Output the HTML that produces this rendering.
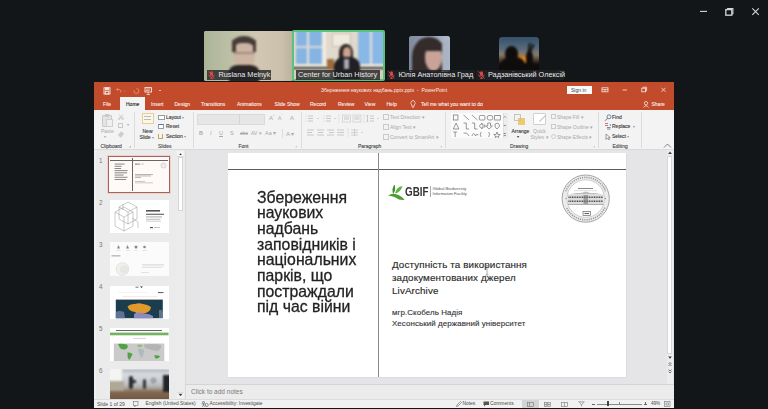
<!DOCTYPE html>
<html><head><meta charset="utf-8">
<style>
*{margin:0;padding:0;box-sizing:border-box}
html,body{width:768px;height:409px;overflow:hidden;background:#131619;font-family:"Liberation Sans",sans-serif}
div,span{position:absolute}
.t{white-space:nowrap;line-height:1}
.lbl{height:10px;background:rgba(34,34,36,.8);color:#e8e8e8;font-size:7.3px;line-height:10px;white-space:nowrap;padding-left:12px}

.tab{color:#fbece6;font-size:5px;top:101.8px;-webkit-text-stroke:0.1px #fbece6}
.rt{color:#3a3a3a;font-size:5px;-webkit-text-stroke:0.12px #3a3a3a}
.gl{color:#4a4a4a;font-size:5px;top:143.5px;-webkit-text-stroke:0.12px #4a4a4a}
.dis{color:#a8a8a8;font-size:5px}
.sep{width:1px;background:#dcdcdc;top:112px;height:36px}
</style></head><body>
<!-- ZOOM TILES -->
<div style="left:204px;top:31px;width:88.5px;height:50px;border-radius:2px;overflow:hidden;background:#c4c0aa">
 <div style="left:-3px;top:-3px;width:95px;height:56px;filter:blur(1px)">
  <div style="left:0;top:0;width:95px;height:56px;background:linear-gradient(90deg,#aab396 0%,#bcc0a6 30%,#d2c7b2 60%,#cbc0ab 85%,#b3ae98 100%)"></div>
  <div style="left:31px;top:8px;width:24px;height:16px;border-radius:50% 50% 30% 30%;background:#463b37"></div>
  <div style="left:32px;top:15px;width:22px;height:25px;border-radius:35% 35% 45% 45%;background:#cdb5a3"></div>
  <div style="left:33px;top:24px;width:20px;height:2px;background:#6d5a52;opacity:.45"></div>
  <div style="left:31px;top:12px;width:3.5px;height:12px;background:#463b37"></div>
  <div style="left:51.5px;top:12px;width:3.5px;height:12px;background:#463b37"></div>
  <div style="left:28px;top:37px;width:30px;height:20px;border-radius:30% 30% 0 0;background:#2a2523"></div>
 </div>
</div>
<div style="left:292px;top:30px;width:92.5px;height:51px;border-radius:2px;overflow:hidden;background:#5bc27a">
 <div style="left:2px;top:2px;width:88.5px;height:47px;overflow:hidden;background:#e1d9cb">
  <div style="filter:blur(1px);left:-2px;top:-2px;width:93px;height:51px">
  <div style="left:0;top:0;width:93px;height:51px;background:#e1d9cb"></div>
  <div style="left:4px;top:0;width:26px;height:34px;background:#86b4e2"></div>
  <div style="left:15px;top:0;width:2px;height:34px;background:#e6e2da"></div>
  <div style="left:4px;top:16px;width:26px;height:2px;background:#d8d8d8"></div>
  <div style="left:30px;top:0;width:4px;height:38px;background:#f0ebe2"></div>
  <div style="left:40px;top:3px;width:19px;height:14px;background:#efe9de;border:1px solid #c8bfae"></div>
  <div style="left:66px;top:0;width:27px;height:34px;background:#8ab8e6"></div>
  <div style="left:78px;top:0;width:2px;height:34px;background:#e6e2da"></div>
  <div style="left:0;top:34px;width:93px;height:3px;background:#ede7dc"></div>
  <div style="left:0;top:37px;width:93px;height:2px;background:#3d3a36"></div>
  <div style="left:0;top:39px;width:93px;height:12px;background:#d7cdbd"></div>
  <div style="left:35px;top:29px;width:7px;height:11px;background:#9a6a3e"></div>
  <div style="left:47px;top:14px;width:14px;height:20px;border-radius:45% 45% 20% 20%;background:#2c2322"></div>
  <div style="left:51px;top:17px;width:8px;height:12px;border-radius:45%;background:#caa28e"></div>
  <div style="left:42px;top:27px;width:26px;height:26px;border-radius:35% 35% 0 0;background:#211e24"></div>
  <div style="left:52px;top:29px;width:5px;height:10px;background:#a9aab4"></div>
  </div>
 </div>
</div>
<div style="left:409px;top:36px;width:40.5px;height:36px;background:#8f9aae;border-radius:3px;overflow:hidden">
 <div style="left:-2px;top:-2px;width:45px;height:40px;filter:blur(1px)">
  <div style="left:0;top:0;width:45px;height:40px;background:linear-gradient(90deg,#7d889c 0%,#9aa5b8 60%,#b9c2d0 100%)"></div>
  <div style="left:5px;top:3px;width:34px;height:42px;border-radius:48% 48% 0 0;background:#342b2b"></div>
  <div style="left:18px;top:12px;width:17px;height:25px;border-radius:40% 40% 50% 50%;background:#c9a298"></div>
  <div style="left:16px;top:8px;width:21px;height:9px;background:#342b2b;border-radius:40% 40% 20% 20%"></div>
  <div style="left:35px;top:6px;width:8px;height:34px;background:#a9b3c4"></div>
 </div>
</div>
<div style="left:499px;top:36.5px;width:40px;height:34px;border-radius:3px;overflow:hidden;background:#141210">
 <div style="left:-2px;top:-2px;width:44px;height:38px;filter:blur(1px);background:linear-gradient(180deg,#2f4c68 0%,#556a7c 35%,#8a7c6c 52%,#3a2a1c 70%,#121010 78%,#100e0d 100%)">
  <div style="left:12px;top:20px;width:24px;height:10px;border-radius:50%;background:radial-gradient(ellipse at center,#ffb02a 0%,#e07a1a 45%,rgba(120,60,20,0) 75%)"></div>
  <div style="left:8px;top:11px;width:13px;height:15px;border-radius:50% 50% 40% 40%;background:#0f0d0c"></div>
  <div style="left:4px;top:22px;width:24px;height:18px;border-radius:40% 40% 0 0;background:#0f0d0c"></div>
  <div style="left:0;top:28px;width:44px;height:10px;background:#0f0d0c"></div>
  <div style="left:31px;top:8px;width:2px;height:12px;background:#0f0d0c;transform:rotate(10deg)"></div>
  <div style="left:34px;top:9px;width:2px;height:8px;background:#0f0d0c;transform:rotate(25deg)"></div>
  <div style="left:29px;top:16px;width:7px;height:16px;background:#0f0d0c;border-radius:40%"></div>
 </div>
</div>
<div class="lbl" style="left:206.5px;top:70.3px;width:64px"><svg class="mic" width="7" height="8" viewBox="0 0 7 8" style="position:absolute;left:1.5px;top:1px"><rect x="2" y="0.3" width="3" height="4.6" rx="1.5" fill="#d8474a"/><path d="M0.8 3.5 Q0.8 6.2 3.5 6.2 Q6.2 6.2 6.2 3.5 M3.5 6.2 L3.5 7.8 M2 7.6 L5 7.6" stroke="#d8474a" stroke-width="0.8" fill="none"/><path d="M0.5 0.5 L6.5 7.5" stroke="#d8474a" stroke-width="0.9"/></svg>Ruslana Melnyk</div>
<div class="lbl" style="left:296px;top:70.3px;width:84px;padding-left:2px">Center for Urban History</div>
<div class="lbl" style="left:386.5px;top:70.3px;width:88px"><svg class="mic" width="7" height="8" viewBox="0 0 7 8" style="position:absolute;left:1.5px;top:1px"><rect x="2" y="0.3" width="3" height="4.6" rx="1.5" fill="#d8474a"/><path d="M0.8 3.5 Q0.8 6.2 3.5 6.2 Q6.2 6.2 6.2 3.5 M3.5 6.2 L3.5 7.8 M2 7.6 L5 7.6" stroke="#d8474a" stroke-width="0.8" fill="none"/><path d="M0.5 0.5 L6.5 7.5" stroke="#d8474a" stroke-width="0.9"/></svg>Юлія Анатолівна Град</div>
<div class="lbl" style="left:476px;top:70.3px;width:88px"><svg class="mic" width="7" height="8" viewBox="0 0 7 8" style="position:absolute;left:1.5px;top:1px"><rect x="2" y="0.3" width="3" height="4.6" rx="1.5" fill="#d8474a"/><path d="M0.8 3.5 Q0.8 6.2 3.5 6.2 Q6.2 6.2 6.2 3.5 M3.5 6.2 L3.5 7.8 M2 7.6 L5 7.6" stroke="#d8474a" stroke-width="0.8" fill="none"/><path d="M0.5 0.5 L6.5 7.5" stroke="#d8474a" stroke-width="0.9"/></svg>Радзанівський Олексій</div>

<!-- window controls -->
<svg style="position:absolute;left:695px;top:5px" width="70" height="14" viewBox="0 0 70 14" fill="none" stroke="#d4d6d8" stroke-width="1.1">
  <path d="M5 6.4 L12 6.4"/>
  <rect x="30.8" y="4.6" width="6" height="5.6" stroke-width="1.3"/><path d="M32.6 4.4 L32.6 3.5 L37.9 3.5 L37.9 8.8 L37 8.8" stroke-width="1.1"/>
  <path d="M57.3 3.3 L63.8 9.8 M63.8 3.3 L57.3 9.8"/>
</svg>
<!-- PPT WINDOW -->
<div id="ppt" style="left:94px;top:82px;width:580px;height:326px;background:#f3f3f3"></div>
<div style="left:94px;top:82px;width:580px;height:28px;background:#c24b2c"></div>
<div style="left:120px;top:97px;width:25px;height:13px;background:#f3f3f3"></div>
<span class="t tab" style="left:103px">File</span>
<span class="t tab" style="left:126px;color:#333;-webkit-text-stroke:0.15px #333">Home</span>
<span class="t tab" style="left:151px">Insert</span>
<span class="t tab" style="left:174.5px">Design</span>
<span class="t tab" style="left:201px">Transitions</span>
<span class="t tab" style="left:237px">Animations</span>
<span class="t tab" style="left:274.5px">Slide Show</span>
<span class="t tab" style="left:310px">Record</span>
<span class="t tab" style="left:338px">Review</span>
<span class="t tab" style="left:364.5px">View</span>
<span class="t tab" style="left:386.5px">Help</span>
<span class="t tab" style="left:421px">Tell me what you want to do</span>
<span class="t tab" style="left:651.5px">Share</span>
<span class="t" style="left:321px;top:88.3px;color:#fbece6;font-size:5px">Збереження наукових надбань.pptx.pptx &nbsp;-&nbsp; PowerPoint</span>
<div style="left:566.5px;top:86px;width:25px;height:8px;background:#fafafa"></div>
<span class="t" style="left:571px;top:87.5px;color:#444;font-size:5px">Sign in</span>



<!-- THUMBS PANE -->
<div style="left:94px;top:150px;width:91px;height:249px;background:#ebebeb"></div>
<div style="left:94px;top:150px;width:2px;height:249px;background:#f0f0f0"></div>
<div style="left:177px;top:151px;width:6.5px;height:246px;background:#ececec"></div>
<div style="left:177px;top:151px;width:6.5px;height:5.5px;background:#f4f4f4;border-bottom:1px solid #ddd"></div>
<svg style="position:absolute;left:178px;top:152px" width="5" height="4" viewBox="0 0 5 4"><path d="M1.2 2.9 L2.5 1.3 L3.8 2.9 Z" fill="#333"/></svg>
<div style="left:177.5px;top:157px;width:5.5px;height:54px;background:#fdfdfd;border:1px solid #d6d6d6"></div>
<div style="left:177px;top:392px;width:6.5px;height:6px;background:#f4f4f4;border-top:1px solid #ddd"></div>
<svg style="position:absolute;left:178px;top:393px" width="5" height="4" viewBox="0 0 5 4"><path d="M0.5 0.8 L2.5 3.2 L4.5 0.8 Z" fill="#444"/></svg>
<div style="left:185px;top:150px;width:1px;height:249px;background:#d9d9d9"></div>
<div style="left:190px;top:150px;width:0.6px;height:234px;background:#dedee2"></div>
<!-- slide numbers -->
<span class="t" style="left:99px;top:157.5px;color:#777;font-size:6.3px">1</span>
<span class="t" style="left:99px;top:199.5px;color:#777;font-size:6.3px">2</span>
<span class="t" style="left:99px;top:241.5px;color:#777;font-size:6.3px">3</span>
<span class="t" style="left:99px;top:283.5px;color:#777;font-size:6.3px">4</span>
<span class="t" style="left:99px;top:325.5px;color:#777;font-size:6.3px">5</span>
<span class="t" style="left:99px;top:367.5px;color:#777;font-size:6.3px">6</span>
<!-- thumb 1 -->
<div style="left:108px;top:156.3px;width:62px;height:36.5px;border:1.6px solid #a5655a;background:#fffaf7;box-shadow:0 0 0 1px #ecd2ca"></div>
<div style="left:109.6px;top:159.7px;width:58.8px;height:0.6px;background:#666"></div>
<div style="left:132.1px;top:157.9px;width:0.7px;height:33.3px;background:#666"></div>
<svg style="position:absolute;left:109.6px;top:157.9px" width="59" height="33" viewBox="0 0 59 33">
  <g fill="#7a7a7a"><rect x="4.6" y="5.6" width="10" height="0.9"/><rect x="4.6" y="7.8" width="7" height="0.9"/><rect x="4.6" y="10" width="6.5" height="0.9"/><rect x="4.6" y="12.2" width="13" height="0.9"/><rect x="4.6" y="14.4" width="12.5" height="0.9"/><rect x="4.6" y="16.6" width="9" height="0.9"/><rect x="4.6" y="18.8" width="13" height="0.9"/><rect x="4.6" y="21" width="11.5" height="0.9"/></g>
  <rect x="25" y="5.5" width="2" height="1.3" fill="#7aaa5a"/><rect x="27.2" y="5.6" width="2.5" height="1" fill="#777"/><rect x="30.5" y="5.7" width="3.5" height="0.7" fill="#bbb"/>
  <circle cx="53.5" cy="7.5" r="2.6" fill="#eee" stroke="#aaa" stroke-width="0.4"/>
  <rect x="25" y="16" width="18" height="0.7" fill="#999"/><rect x="25" y="17.6" width="16" height="0.7" fill="#999"/><rect x="25" y="19.2" width="6" height="0.7" fill="#999"/>
  <rect x="25" y="23" width="10" height="0.6" fill="#aaa"/><rect x="25" y="24.6" width="18" height="0.6" fill="#aaa"/>
</svg>
<!-- thumb 2 -->
<div style="left:110px;top:200px;width:58.5px;height:33px;background:#fff"></div>
<svg style="position:absolute;left:110px;top:200px" width="59" height="33" viewBox="0 0 59 33" fill="none" stroke="#8a8a8a" stroke-width="0.45">
  <path d="M9 7 L18 2 L27 7 L27 19 L18 24 L9 19 Z"/><path d="M9 7 L18 12 L27 7 M18 12 L18 24"/>
  <path d="M5 12 L14 7 L23 12 L23 26 L14 31 L5 26 Z"/><path d="M5 12 L14 17 L23 12 M14 17 L14 31"/>
  <path d="M13 4 L13 10 M22 18 L28 22 L28 28"/>
  <rect x="36" y="10" width="14" height="1.6" fill="#555" stroke="none"/>
  <rect x="36" y="13.8" width="18" height="0.8" fill="#222" stroke="none"/>
  <rect x="36" y="16" width="16" height="0.6" fill="#aaa" stroke="none"/><rect x="36" y="17.6" width="16" height="0.6" fill="#aaa" stroke="none"/><rect x="36" y="19.2" width="14" height="0.6" fill="#aaa" stroke="none"/><rect x="36" y="20.8" width="15" height="0.6" fill="#aaa" stroke="none"/>
  <rect x="40" y="27" width="3" height="1.2" fill="#555" stroke="none"/><rect x="44" y="27.2" width="6" height="0.7" fill="#aaa" stroke="none"/>
</svg>
<!-- thumb 3 -->
<div style="left:110px;top:241.8px;width:58.5px;height:34px;background:#fbfbfb"></div>
<svg style="position:absolute;left:110px;top:242px" width="59" height="34" viewBox="0 0 59 34">
  <g fill="#888"><path d="M8.5 3 L10 6.5 L7 6.5 Z"/><path d="M17.5 3 L19 6.5 L16 6.5 Z"/><circle cx="26" cy="5" r="1.5"/><circle cx="34.5" cy="5" r="1.3"/></g>
  <g fill="#ccc"><rect x="6.5" y="8.5" width="4" height="0.5"/><rect x="16" y="8.5" width="4" height="0.5"/><rect x="24.5" y="8.5" width="3" height="0.5"/><rect x="32" y="8.5" width="5" height="0.5"/></g>
  <rect x="1.5" y="13.5" width="9" height="0.8" fill="#888"/>
  <circle cx="12.5" cy="27" r="6.3" fill="#f0f0ee" stroke="#d0d0cc" stroke-width="0.5"/>
  <circle cx="14" cy="27.5" r="4" fill="#e6e6e2"/>
  <rect x="32" y="22" width="22" height="0.6" fill="#d4d4d4"/><rect x="32" y="23.6" width="22" height="0.6" fill="#d4d4d4"/><rect x="32" y="25.2" width="20" height="0.6" fill="#d4d4d4"/>
  <rect x="31" y="30" width="8" height="0.6" fill="#d4d4d4"/>
</svg>
<!-- thumb 4 -->
<div style="left:110px;top:285.5px;width:58.5px;height:33px;background:#fff"></div>
<svg style="position:absolute;left:110px;top:285.5px" width="59" height="33" viewBox="0 0 59 33">
  <rect x="25.5" y="0.6" width="3" height="1.2" fill="#888"/><path d="M30 0.5 L33 0.5 L31.5 2 Z" fill="#333"/>
  <rect x="48" y="6" width="5.5" height="1.1" fill="#666"/>
  <rect x="8" y="6.3" width="30" height="0.5" fill="#e8e8e8"/>
  <rect x="12" y="10.5" width="36" height="0.6" fill="#f0d8c8"/>
  <rect x="5.8" y="13.6" width="47" height="18.6" fill="#1b3d4d"/>
  <path d="M5.8 26 Q9 24 14 26 L15 32.2 L5.8 32.2 Z" fill="#6f7fa8" opacity="0.8"/>
  <path d="M17.5 20.5 Q20 17.5 25 18 Q29 16.5 33 18 Q37.5 18.5 41 21 Q40.5 25 37 26.5 Q33 27 31 29 Q27 28.5 25 26 Q21.5 25.5 19 23.5 Z" fill="#e29a2c"/>
  <path d="M24 28 Q29 25.5 33 27.5 Q39 27 43 30 L43 32.2 L24 32.2 Z" fill="#8a8cc0"/>
  <path d="M49 24 Q52 23 52.8 26 L52.8 32 L49 32 Z" fill="#8a9ab6" opacity="0.6"/>
</svg>
<!-- thumb 5 -->
<div style="left:110px;top:327.5px;width:58.5px;height:33px;background:#fff"></div>
<svg style="position:absolute;left:110px;top:327.5px" width="59" height="33" viewBox="0 0 59 33">
  <rect x="6" y="2" width="46" height="0.9" fill="#555"/>
  <rect x="0" y="4.6" width="58.5" height="2.7" fill="#73b463"/>
  <rect x="23" y="10" width="13" height="0.6" fill="#bbb"/>
  <rect x="3.8" y="15.5" width="50.5" height="17.5" fill="#cacaca"/>
  <path d="M8 16 Q13 15.5 17 16.5 Q19 19 16 21 Q13 22.5 10 20 Z" fill="#4ea441"/>
  <path d="M17.5 24.5 Q21 24 22.5 26 Q21 30 19 32 Q17 29 17.5 24.5 Z" fill="#4ea441"/>
  <path d="M27 17 Q30 16 33 17.5 Q31 20 28 19 Z" fill="#8fc07a"/>
  <path d="M28 21 Q32 20 34 22 Q34 27 31.5 30 Q29 27 28 21 Z" fill="#b0b8b8"/>
  <path d="M34 16.5 Q44 15.5 51 17 Q52 21 47 23 Q41 22 35 20 Z" fill="#b4b4b4"/>
  <path d="M44 27.5 Q48 26.5 50 28.5 Q49 31 45.5 30.5 Z" fill="#4ea441"/>
</svg>
<!-- thumb 6 -->
<div style="left:110px;top:369px;width:58.5px;height:29.5px;background:#a8a296;overflow:hidden">
 <div style="left:-2px;top:-2px;width:63px;height:34px;filter:blur(0.9px)">
  <div style="left:0;top:0;width:63px;height:34px;background:linear-gradient(180deg,#d9dce0 0%,#d2d5d9 30%,#c4c6c9 48%,#aaa79f 62%,#856a52 72%,#6e543f 100%)"></div>
  <div style="left:0;top:0;width:14px;height:14px;background:#f4f4f4"></div>
  <div style="left:0;top:14px;width:16px;height:10px;background:#b0a897"></div>
  <div style="left:14px;top:3px;width:47px;height:2px;background:#b4b8be"></div>
  <div style="left:21px;top:9px;width:4px;height:13px;background:#23272e;border-radius:2px"></div>
  <div style="left:24px;top:13px;width:4px;height:3px;background:#2a2e35"></div>
  <div style="left:35px;top:12px;width:3px;height:10px;background:#2e3238;border-radius:2px"></div>
  <div style="left:42.5px;top:11px;width:5px;height:5px;border-radius:50%;border:0.8px solid #555"></div>
  <div style="left:55px;top:8px;width:8px;height:17px;background:#22252a"></div>
 </div>
</div>
<!-- WORK AREA -->
<div style="left:186px;top:150px;width:488px;height:234px;background:#e5e5e8"></div>
<div style="left:666.5px;top:150px;width:6px;height:234px;background:#ececec"></div>
<svg style="position:absolute;left:666.5px;top:150px" width="6" height="6" viewBox="0 0 6 6"><path d="M1 4 L3 1.5 L5 4 Z" fill="#444"/></svg>
<div style="left:667px;top:156px;width:5px;height:198px;background:#fdfdfd;border:1px solid #d6d6d6"></div>
<svg style="position:absolute;left:666.5px;top:355px" width="6" height="20" viewBox="0 0 6 20"><path d="M1.2 1.5 L3 3.8 L4.8 1.5 Z" fill="#333"/><path d="M1.5 9 L3 7.5 L4.5 9 M1.5 11 L3 9.5 L4.5 11" stroke="#555" stroke-width="0.8" fill="none"/><path d="M1.5 14.5 L3 16 L4.5 14.5 M1.5 16.5 L3 18 L4.5 16.5" stroke="#555" stroke-width="0.8" fill="none"/></svg>
<!-- SLIDE -->
<div id="slide" style="left:227.5px;top:153px;width:398.5px;height:224px;background:#fff;box-shadow:0.5px 0.5px 1.5px #c8c8c8"></div>
<div style="left:227.5px;top:168.6px;width:398.5px;height:1.3px;background:#5c5c5c"></div>
<div style="left:377.5px;top:153px;width:1.3px;height:224px;background:#8c8c8c"></div>

<!-- SLIDE CONTENT -->
<div class="t" style="left:257px;top:189.5px;color:#222;font-size:17px;line-height:15.7px;white-space:pre;transform:scaleX(0.93);transform-origin:0 0;-webkit-text-stroke:0.3px #222">Збереження
наукових
надбань
заповідників і
національних
парків, що
постраждали
під час війни</div>
<!-- gbif -->
<svg style="position:absolute;left:387px;top:183px" width="19" height="18" viewBox="0 0 19 18">
  <path d="M7.5 1.5 Q4.5 5 6 11 Q9.5 7.5 7.5 1.5 Z" fill="#3f8f2a"/>
  <path d="M15.5 3 Q9.5 3.5 8 10.5 Q13.5 9.5 15.5 3 Z" fill="#62b33d"/>
  <path d="M1 12.5 Q5.5 9.5 10 11.5 Q15 13 17.5 17 Q12 17.5 8.5 14.5 Q5 12.8 1 12.5 Z" fill="#4d9e31"/>
</svg>
<span class="t" style="left:405px;top:185.5px;color:#333;font-size:12px;font-weight:bold;transform:scaleX(0.82);transform-origin:0 0">GBIF</span>
<div style="left:429.5px;top:186px;width:0.7px;height:10.5px;background:#aaa"></div>
<span class="t" style="left:432.5px;top:187px;color:#555;font-size:4.1px;line-height:4.8px">Global Biodiversity<br>Information Facility</span>
<!-- seal -->
<svg style="position:absolute;left:561px;top:174px" width="50" height="50" viewBox="0 0 50 50" fill="none">
  <circle cx="24.7" cy="24.6" r="21.3" stroke="#ececec" stroke-width="4"/>
  <path d="M4.78 17.35 A21.2 21.2 0 0 1 44.62 17.35" stroke="#9a9a9a" stroke-width="1.6" stroke-dasharray="1.2 1"/>
  <path d="M43.91 33.56 A21.2 21.2 0 0 1 5.49 33.56" stroke="#9a9a9a" stroke-width="1.6" stroke-dasharray="1.2 1"/>
  <circle cx="5" cy="24.6" r="0.7" fill="#888"/><circle cx="44.4" cy="24.6" r="0.7" fill="#888"/>
  <circle cx="24.7" cy="24.6" r="23.6" stroke="#8d8d8d" stroke-width="0.8"/>
  <circle cx="24.7" cy="24.6" r="18.8" stroke="#a5a5a5" stroke-width="0.6"/>
  <rect x="17" y="14" width="15" height="1" fill="#888"/>
  <rect x="13" y="16.5" width="23" height="0.6" fill="#c8c8c8"/>
  <path d="M8 20.5 L15 19 L20 19 L24.7 17.5 L29.5 19 L34.5 19 L41.5 20.5 Z" fill="#bdbdbd"/>
  <rect x="7" y="20.5" width="35.5" height="9.5" fill="#dcdcdc"/>
  <path d="M7.5 23.2 L42 23.2" stroke="#444" stroke-width="1.5" stroke-dasharray="1 0.7"/>
  <path d="M7.5 27.2 L42 27.2" stroke="#444" stroke-width="1.5" stroke-dasharray="1 0.7"/>
  <rect x="22.5" y="21" width="4.5" height="9" fill="#777" opacity="0.6"/>
  <rect x="7" y="30" width="35.5" height="0.8" fill="#999"/>
  <rect x="22" y="37.5" width="7.5" height="4" fill="#f4f4f4" stroke="#6a6a6a" stroke-width="0.7"/>
  <rect x="23.5" y="39" width="4.5" height="1" fill="#666"/>
</svg>
<div style="left:392px;top:259px;color:#2a2a2a;font-size:9.8px;letter-spacing:0.13px;line-height:12.9px;white-space:pre;-webkit-text-stroke:0.15px #2a2a2a" class="t">Доступність та використання
задокументованих джерел
LivArchive</div>
<div style="left:392px;top:308px;color:#333;font-size:7.95px;letter-spacing:0.08px;line-height:10.9px;white-space:pre;-webkit-text-stroke:0.12px #333" class="t">мгр.Скобель Надія
Хесонський державний університет</div>
<svg style="position:absolute;left:484.5px;top:264.5px" width="4" height="11" viewBox="0 0 4 11"><path d="M0.5 0.5 L3.5 0.5 M2 0.5 L2 10 M0.5 10 L3.5 10" stroke="#777" stroke-width="0.6" fill="none"/></svg>
<!-- NOTES -->
<div style="left:186px;top:384px;width:488px;height:15px;background:#ececec;border-top:1px solid #d4d4d4"></div>
<span class="t" style="left:191px;top:388.5px;color:#7a7a7a;font-size:6.5px">Click to add notes</span>
<!-- STATUS -->
<div style="left:94px;top:399px;width:580px;height:8.5px;background:#f1f1f1;border-top:1px solid #dcdcdc"></div>
<span class="t" style="left:97px;top:401.8px;color:#4a4a4a;font-size:5px">Slide 1 of 29</span>
<svg style="position:absolute;left:133px;top:401px" width="6" height="6" viewBox="0 0 6 6" fill="none" stroke="#777" stroke-width="0.6"><rect x="0.5" y="0.5" width="4.5" height="4"/><path d="M1.5 4.5 L1.5 5.8 L3 4.5"/><path d="M4 0.5 L5.5 -1"/></svg>
<span class="t" style="left:145.5px;top:401.8px;color:#4a4a4a;font-size:4.9px">English (United States)</span>
<svg style="position:absolute;left:201px;top:401px" width="8" height="6" viewBox="0 0 8 6" fill="none" stroke="#555" stroke-width="0.6"><circle cx="2.5" cy="1.3" r="1"/><path d="M0.5 2.8 L4.5 2.8 M2.5 2.8 L2.5 4 L1.2 5.8 M2.5 4 L3.8 5.8"/><circle cx="5.8" cy="4" r="1.5"/></svg>
<span class="t" style="left:209.5px;top:401.8px;color:#4a4a4a;font-size:4.9px">Accessibility: Investigate</span>
<svg style="position:absolute;left:456px;top:401px" width="6" height="6" viewBox="0 0 6 6" fill="none" stroke="#666" stroke-width="0.6"><path d="M0.5 5.5 L1 4 L4.5 0.5 L5.5 1.5 L2 5 Z"/></svg>
<span class="t" style="left:462.5px;top:401.8px;color:#4a4a4a;font-size:4.9px">Notes</span>
<svg style="position:absolute;left:482.5px;top:401px" width="7" height="6" viewBox="0 0 7 6"><path d="M0.5 0.5 L6 0.5 L6 4 L2.5 4 L1 5.5 L1 4 L0.5 4 Z" fill="#555"/></svg>
<span class="t" style="left:490px;top:401.8px;color:#4a4a4a;font-size:4.9px">Comments</span>
<div style="left:522px;top:399.5px;width:16.5px;height:8px;background:#d4d4d4"></div>
<svg style="position:absolute;left:527px;top:401.5px" width="7" height="5" viewBox="0 0 7 5" fill="none" stroke="#777" stroke-width="0.6"><rect x="0.5" y="0.5" width="6" height="4"/><path d="M2.5 0.5 L2.5 4.5"/></svg>
<svg style="position:absolute;left:543.5px;top:401.5px" width="7" height="5" viewBox="0 0 7 5" fill="none" stroke="#777" stroke-width="0.6"><rect x="0.5" y="0.5" width="2.5" height="1.7"/><rect x="3.8" y="0.5" width="2.5" height="1.7"/><rect x="0.5" y="2.8" width="2.5" height="1.7"/><rect x="3.8" y="2.8" width="2.5" height="1.7"/></svg>
<svg style="position:absolute;left:560.5px;top:401.5px" width="7" height="5" viewBox="0 0 7 5" fill="none" stroke="#777" stroke-width="0.6"><rect x="0.5" y="0.5" width="6" height="4"/><path d="M3.5 0.5 L3.5 4.5"/></svg>
<svg style="position:absolute;left:577.5px;top:401px" width="7" height="6" viewBox="0 0 7 6" fill="none" stroke="#777" stroke-width="0.6"><path d="M0.5 0.8 L6.5 0.8 M1.2 0.8 L3.5 4 L5.8 0.8 M3.5 4 L3.5 5.5"/></svg>
<div style="left:591.5px;top:403.5px;width:3px;height:0.7px;background:#666"></div>
<div style="left:597px;top:403.5px;width:45px;height:0.6px;background:#8a8a8a"></div>
<div style="left:619.3px;top:402px;width:0.6px;height:3px;background:#888"></div>
<div style="left:607px;top:401px;width:2px;height:5px;background:#444"></div>
<div style="left:643.5px;top:403.5px;width:3px;height:0.7px;background:#666"></div>
<div style="left:644.65px;top:402.3px;width:0.7px;height:3px;background:#666"></div>
<span class="t" style="left:651px;top:401.8px;color:#4a4a4a;font-size:4.6px">49%</span>
<svg style="position:absolute;left:663.5px;top:401px" width="7" height="6" viewBox="0 0 7 6" fill="none" stroke="#777" stroke-width="0.6"><rect x="0.5" y="0.5" width="5.5" height="5"/><rect x="2" y="2" width="2.5" height="2"/></svg>
<!-- QAT -->
<svg style="position:absolute;left:103px;top:87px" width="60" height="8" viewBox="0 0 60 8" fill="none" stroke="#f9e9e2" stroke-width="0.9">
  <rect x="1" y="0.8" width="6" height="6.2"/>
  <rect x="2.5" y="0.8" width="3" height="2" fill="#f9e9e2"/>
  <rect x="2.3" y="4.3" width="3.4" height="2.7"/>
  <path d="M13.5 2.5 L14.8 1.2 M13.5 2.5 L14.8 3.8 M13.5 2.5 L16.5 2.5 Q18.5 3 17.8 5.5" stroke="#e39b84" stroke-width="0.8"/>
  <path d="M20.8 3.5 L21.6 4.3 L22.4 3.5" stroke="#e39b84" stroke-width="0.6"/>
  <path d="M33.5 1.5 A2.5 2.5 0 1 1 31 3.2" stroke="#e39b84" stroke-width="0.8"/>
  <rect x="42" y="0.6" width="6.5" height="4.4"/>
  <path d="M45.2 5 L45.2 7.5 M43.5 7.5 L47 7.5 M43 2 L47.5 2 M43 3.4 L46.5 3.4" stroke-width="0.7"/>
  <path d="M56 3 L57 4 L58 3" stroke-width="0.7"/>
</svg>
<!-- title right controls -->
<svg style="position:absolute;left:600px;top:86px" width="70" height="8" viewBox="0 0 70 8" fill="none" stroke="#f9e9e2" stroke-width="0.8">
  <rect x="2" y="1.8" width="6" height="4"/><path d="M2 3.6 L8 3.6 M5 3.6 L5 5.8"/>
  <path d="M22.5 4 L27 4"/>
  <rect x="41.8" y="2.2" width="3.8" height="3.6"/><path d="M43 2.2 L43 1.2 L46.6 1.2 L46.6 4.8 L45.6 4.8"/>
  <path d="M61.5 1.8 L65.5 5.8 M65.5 1.8 L61.5 5.8"/>
</svg>
<svg style="position:absolute;left:643px;top:100.5px" width="6" height="7" viewBox="0 0 6 7" fill="none" stroke="#f9e9e2" stroke-width="0.75">
  <circle cx="3" cy="2.2" r="1.7"/><path d="M0.5 6.5 Q3 3 5.5 6.5"/>
</svg>
<svg style="position:absolute;left:409.5px;top:100px" width="6" height="8" viewBox="0 0 6 8" fill="none" stroke="#f9e9e2" stroke-width="0.75"><path d="M1.8 5 Q0.5 3.8 1 2.2 Q1.8 0.5 3 0.5 Q4.4 0.5 5 2.2 Q5.5 3.8 4.2 5 L4.2 6.2 L1.8 6.2 Z"/><path d="M2.2 7.4 L3.8 7.4"/></svg>
<!-- RIBBON -->
<div style="left:94px;top:110px;width:580px;height:40px;background:#f3f3f3;border-bottom:1px solid #d9d9d9"></div>
<div class="sep" style="left:134px"></div>
<div class="sep" style="left:193px"></div>
<div class="sep" style="left:301px"></div>
<div class="sep" style="left:445px"></div>
<div class="sep" style="left:598px"></div>
<div class="sep" style="left:641px"></div>
<!-- clipboard -->
<div style="left:102px;top:115px;width:10px;height:12px;border:1px solid #c9c9c9;background:#e4e4e4;border-radius:1px"></div>
<div style="left:105px;top:113.5px;width:4px;height:3px;background:#c9c9c9"></div>
<div style="left:106px;top:119px;width:7px;height:8px;background:#f0f0f0;border:1px solid #cfcfcf"></div>
<span class="t dis" style="left:101px;top:129px">Paste</span>
<span class="t dis" style="left:104px;top:135px;font-size:4px">▾</span>
<svg style="position:absolute;left:117.5px;top:113.5px" width="6" height="6" viewBox="0 0 6 6" fill="none" stroke="#b5b5b5" stroke-width="0.6"><path d="M1 0.5 L4.2 4 M5 0.5 L1.8 4"/><circle cx="1.3" cy="4.6" r="0.9"/><circle cx="4.7" cy="4.6" r="0.9"/></svg>
<div style="left:117.5px;top:123px;width:5px;height:5px;border:1px solid #c9c9c9"></div>
<span class="t dis" style="left:127px;top:123px;font-size:4px">▾</span>
<div style="left:119px;top:132px;width:4px;height:5px;background:#cdcdcd;transform:rotate(40deg)"></div>
<span class="t gl" style="left:100.5px">Clipboard</span>
<span class="t gl" style="left:129px;font-size:4px">⌟</span>
<!-- slides -->
<div style="left:141.5px;top:113px;width:12.5px;height:10.5px;border:1px solid #e3cf9a;background:#fbf6e6"></div>
<div style="left:144px;top:116px;width:7px;height:1px;background:#bbb"></div>
<div style="left:144px;top:119px;width:7px;height:1px;background:#bbb"></div>
<span class="t rt" style="left:142.5px;top:128.5px">New</span>
<span class="t rt" style="left:139.5px;top:135px">Slide <span style="position:static;color:#999;-webkit-text-stroke:0;font-size:4px">▾</span></span>
<div style="left:157.5px;top:114.5px;width:7px;height:5px;border:0.8px solid #9a9a9a;background:#fff"></div>
<span class="t rt" style="left:166px;top:114.5px">Layout <span style="position:static;color:#999;-webkit-text-stroke:0;font-size:4px">▾</span></span>
<div style="left:158px;top:123.5px;width:6px;height:5px;border:0.8px solid #9a9a9a;background:#fff;border-top-color:#4a80c8"></div>
<span class="t rt" style="left:166px;top:123.5px">Reset</span>
<div style="left:158px;top:133.5px;width:5px;height:5px;border:1px solid #c9a15a;border-top:none"></div>
<span class="t rt" style="left:166px;top:133.5px">Section <span style="position:static;color:#999;-webkit-text-stroke:0;font-size:4px">▾</span></span>
<span class="t gl" style="left:158px">Slides</span>
<!-- font -->
<div style="left:196.5px;top:113.5px;width:68px;height:11px;background:#e6e6e6;border:1px solid #dadada"></div>
<div style="left:238.5px;top:114px;width:1px;height:10px;background:#d5d5d5"></div>
<span class="t dis" style="left:269px;top:115px;font-size:6px">A<sup style="font-size:3px">^</sup></span>
<span class="t dis" style="left:278px;top:115px;font-size:5px">A<sup style="font-size:3px">ˇ</sup></span>
<span class="t dis" style="left:290px;top:115px;font-size:6px">A</span>
<span class="t dis" style="left:199px;top:131px;font-size:5.5px;font-weight:bold">B</span>
<span class="t dis" style="left:210px;top:131px;font-size:5.5px;font-style:italic">I</span>
<span class="t dis" style="left:219px;top:131px;font-size:5.5px;text-decoration:underline">U</span>
<span class="t dis" style="left:230px;top:131px;font-size:5.5px">S</span>
<span class="t dis" style="left:240px;top:131px;font-size:5px;text-decoration:line-through">abc</span>
<span class="t dis" style="left:251px;top:131px;font-size:5px">AV ▾</span>
<span class="t dis" style="left:265px;top:131px;font-size:5.5px">Aa ▾</span>
<div style="left:282px;top:129px;width:1px;height:9px;background:#ddd"></div>
<span class="t dis" style="left:286px;top:130.5px;font-size:6px">A ▾</span>
<span class="t gl" style="left:238.5px">Font</span>
<span class="t gl" style="left:295px;font-size:4px;color:#aaa">⌟</span>
<!-- paragraph -->
<svg style="position:absolute;left:302px;top:112px" width="80" height="26" viewBox="0 0 80 26" fill="none" stroke="#bcbcbc" stroke-width="0.8">
  <path d="M6 4 L11 4 M6 6.5 L11 6.5 M6 9 L11 9"/><path d="M3.5 4 L4.5 4 M3.5 6.5 L4.5 6.5 M3.5 9 L4.5 9" stroke="#c9c9c9"/>
  <path d="M15 6 L16 7 L17 6" stroke-width="0.6"/>
  <path d="M24 4 L29 4 M24 6.5 L29 6.5 M24 9 L29 9"/><path d="M21.5 4 L22.5 4 M21.5 6.5 L22.5 6.5 M21.5 9 L22.5 9" stroke="#c9c9c9"/>
  <path d="M32 6 L33 7 L34 6" stroke-width="0.6"/>
  <path d="M37 2 L37 11" stroke="#dcdcdc"/>
  <rect x="40.5" y="3" width="8" height="7" stroke="#cfcfcf"/><path d="M42 5 L47 5 M42 7 L47 7"/>
  <rect x="51" y="3" width="8" height="7" stroke="#cfcfcf"/><path d="M52.5 5 L57.5 5 M52.5 7 L57.5 7"/>
  <path d="M62 2 L62 11" stroke="#dcdcdc"/>
  <path d="M65.5 3 L65.5 10 M64.5 4 L65.5 3 L66.5 4 M64.5 9 L65.5 10 L66.5 9 M68 4 L72 4 M68 6.5 L72 6.5 M68 9 L72 9"/>
  <path d="M75 6 L76 7 L77 6" stroke-width="0.6"/>
  <path d="M5 18 L12 18 M5 20.5 L10 20.5 M5 23 L12 23"/>
  <path d="M15 18 L22 18 M16 20.5 L21 20.5 M15 23 L22 23"/>
  <path d="M25 18 L32 18 M27 20.5 L32 20.5 M25 23 L32 23"/>
  <path d="M35 18 L42 18 M35 20.5 L42 20.5 M35 23 L42 23"/>
  <path d="M46 16 L46 25" stroke="#dcdcdc"/>
  <path d="M49 18 L56 18 M49 20.5 L56 20.5 M49 23 L56 23 M52.5 17 L52.5 24" stroke-width="0.6"/>
  <path d="M59 20 L60 21 L61 20" stroke-width="0.6"/>
</svg>
<div style="left:383px;top:113.5px;width:6px;height:6px;border:1px solid #c9c9c9"></div>
<span class="t dis" style="left:390px;top:114.5px">Text Direction ▾</span>
<div style="left:383px;top:123.5px;width:6px;height:6px;border:1px solid #c9c9c9"></div>
<span class="t dis" style="left:390px;top:124.5px">Align Text ▾</span>
<div style="left:383px;top:133.5px;width:6px;height:6px;border:1px solid #c9c9c9"></div>
<span class="t dis" style="left:390px;top:134.5px">Convert to SmartArt ▾</span>
<span class="t gl" style="left:358px">Paragraph</span>
<span class="t gl" style="left:440px;font-size:4px;color:#aaa">⌟</span>
<!-- drawing -->
<div style="left:450.5px;top:113px;width:52px;height:25px;background:#fbfbfb"></div>
<div style="left:502.5px;top:113px;width:5px;height:25px;background:#ececec;border-left:1px solid #ddd"></div>
<svg style="position:absolute;left:450px;top:113px" width="60" height="25" viewBox="0 0 60 25" fill="none" stroke="#6a6a6a" stroke-width="0.7">
 <g transform="translate(0.5,0) scale(0.93,1)">
  <rect x="3" y="2" width="5" height="5"/><path d="M14 2 L20 7"/><path d="M23 2 L29 7"/><rect x="31" y="2.5" width="6" height="4.5" rx="1"/><rect x="39.5" y="2.5" width="6" height="4.5" rx="2"/><rect x="47.5" y="2.5" width="6" height="4.5"/>
  <path d="M3 16 L6 10 L9 16 Z"/><path d="M14 10 L17 10 L17 16 L20 16"/><path d="M23 10 L26 10 L26 16 L29 16"/><path d="M31 13 L34 10 L34 12 L37 12 L37 14 L34 14 L34 16 Z"/><path d="M40 10 L43 10 L43 13 L45 13 L41.5 16 L38 13 L40 13 Z"/><path d="M48 11 L51 10 L53 13 L50 16 L48 14 Z"/>
  <path d="M5 19 L5 24 M3 19 L7 19"/><path d="M14 20 Q18 19 20 23"/><path d="M23 23 Q25 18 27 23 Q28 20 30 22"/><path d="M33 19 Q31 21 33 24"/><path d="M41 19 Q43 21 41 24"/><path d="M50 19 L51 21.5 L53.5 21.5 L51.5 23 L52 24.5 L50 23.5 L48 24.5 L48.5 23 L46.5 21.5 L49 21.5 Z"/>
 </g>
  <path d="M53.8 4.5 L54.8 3.5 L55.8 4.5" stroke="#555"/><path d="M53.8 12 L54.8 13 L55.8 12" stroke="#555"/><path d="M53.8 20.5 L55.8 20.5 M53.8 22 L54.8 23 L55.8 22" stroke="#555"/>
</svg>
<div style="left:514px;top:114px;width:7px;height:7px;border:1px solid #c3c3c3;background:#f3f3f3"></div>
<div style="left:518px;top:118px;width:7px;height:7px;background:#e6c35a;opacity:.85"></div>
<span class="t rt" style="left:511.5px;top:129px">Arrange</span>
<span class="t rt" style="left:517px;top:135px;font-size:4px">▾</span>
<div style="left:533px;top:113px;width:13px;height:12px;border:1px solid #cfcfcf;background:#fff;border-radius:1px"></div>
<div style="left:538px;top:118px;width:9px;height:1px;background:#c0c0c0;transform:rotate(-45deg)"></div>
<span class="t dis" style="left:533px;top:129px">Quick</span>
<span class="t dis" style="left:530.5px;top:135px">Styles ▾</span>
<div style="left:551px;top:114px;width:5px;height:5px;border:1px solid #cbcbcb"></div>
<span class="t dis" style="left:557px;top:114.5px">Shape Fill ▾</span>
<div style="left:551px;top:124px;width:5px;height:5px;border:1px solid #cbcbcb"></div>
<span class="t dis" style="left:557px;top:124.5px">Shape Outline ▾</span>
<div style="left:551px;top:134px;width:5px;height:5px;border:1px solid #cbcbcb;border-radius:50%"></div>
<span class="t dis" style="left:557px;top:134.5px">Shape Effects ▾</span>
<span class="t gl" style="left:510px">Drawing</span>
<span class="t gl" style="left:593px;font-size:4px;color:#aaa">⌟</span>
<!-- editing -->
<svg style="position:absolute;left:603.5px;top:113.5px" width="8" height="26" viewBox="0 0 8 26" fill="none" stroke-width="0.8">
  <circle cx="5" cy="2.8" r="2" stroke="#4a6fa5"/><path d="M3.6 4.2 L1 6.8" stroke="#555"/>
  <path d="M1 9.5 L4 9.5 M1 11.5 L4 11.5" stroke="#c0504d"/><path d="M3 13.5 L6.5 13.5 M3 15 L6.5 15" stroke="#4a6fa5"/><path d="M6 10 L6.5 12" stroke="#777"/>
  <path d="M2 20 L2 25.5 L3.5 24 L4.8 26 L5.6 25.5 L4.5 23.6 L6.3 23.6 Z" stroke="#666" stroke-width="0.6"/>
</svg>
<span class="t rt" style="left:612px;top:114.5px">Find</span>
<span class="t rt" style="left:612px;top:124px">Replace &nbsp;<span style="position:static;color:#999;-webkit-text-stroke:0;font-size:4px">▾</span></span>
<span class="t rt" style="left:612px;top:133.5px">Select <span style="position:static;color:#999;-webkit-text-stroke:0;font-size:4px">▾</span></span>
<span class="t gl" style="left:612.5px">Editing</span>
<svg style="position:absolute;left:663px;top:143px" width="9" height="5" viewBox="0 0 9 5"><path d="M1 4.5 L4.5 1 L8 4.5" stroke="#666" stroke-width="0.8" fill="none"/></svg>
</body></html>
